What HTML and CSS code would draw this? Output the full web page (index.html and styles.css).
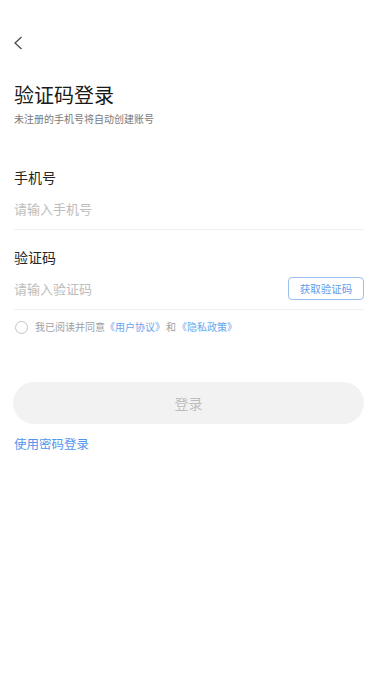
FILE: index.html
```html
<!DOCTYPE html>
<html lang="zh">
<head>
<meta charset="utf-8">
<link rel="stylesheet" href="styles.css">
</head>
<body>
<div class="page">
  <div class="nav">
    <svg class="back" width="10" height="14" viewBox="0 0 10 14"><path d="M8.5 1 L2 7 L8.5 13" fill="none" stroke="#444" stroke-width="1.2"/></svg>
  </div>
  <h1 class="title">验证码登录</h1>
  <p class="subtitle">未注册的手机号将自动创建账号</p>

  <div class="label first">手机号</div>
  <div class="field">
    <span class="placeholder">请输入手机号</span>
  </div>

  <div class="label">验证码</div>
  <div class="field">
    <span class="placeholder">请输入验证码</span>
    <span class="code-btn">获取验证码</span>
  </div>

  <div class="agree">
    <span class="radio"></span>
    <span class="agree-text">我已阅读并同意<a class="blue">《用户协议》</a><span class="and">和</span><a class="blue">《隐私政策》</a></span>
  </div>

  <div class="login">登录</div>
  <div class="pwd-link">使用密码登录</div>
</div>
</body>
</html>
```

FILE: styles.css
```css
* { box-sizing: border-box; }
html, body { margin: 0; padding: 0; background: #fff; }
body {
  font-family: "Noto Sans CJK SC", "Noto Sans", sans-serif;
  width: 378px;
  height: 673px;
  overflow: hidden;
}
.page { padding: 0 14px; }
.nav {
  height: 44px;
  margin-top: 21px;
  display: flex;
  align-items: center;
}
.back { display: block; margin-left: -1px; margin-top: -1px; }
.title {
  margin: 16px 0 0;
  font-size: 20px;
  line-height: 28px;
  font-weight: 400;
  color: #1a1a1a;
}
.subtitle {
  margin: 3px 0 0;
  font-size: 10px;
  line-height: 14px;
  color: #7a7a7a;
}
.label {
  font-size: 14px;
  line-height: 20px;
  color: #262626;
  margin-top: 17px;
}
.label.first { margin-top: 41px; }
.field {
  height: 43px;
  border-bottom: 1px solid #f0f0f0;
  display: flex;
  align-items: center;
  justify-content: space-between;
}
.placeholder {
  font-size: 13px;
  color: #bdbdbd;
}
.code-btn {
  width: 76px;
  height: 23px;
  border: 1px solid #9cc0f2;
  border-radius: 4px;
  font-size: 10.5px;
  color: #5f9be8;
  display: flex;
  align-items: center;
  justify-content: center;
}
.agree {
  display: flex;
  align-items: center;
  margin-top: 10px;
  height: 14px;
}
.radio {
  width: 13px;
  height: 13px;
  border: 1px solid #c4c4c4;
  border-radius: 50%;
  margin-left: 1px;
  flex: none;
}
.agree-text {
  margin-left: 7px;
  font-size: 10px;
  line-height: 14px;
  color: #a0a0a0;
  white-space: nowrap;
}
.blue { color: #6aa5ec; }
.and { margin: 0 1px; }
.login {
  margin-top: 48px;
  margin-left: -1px;
  height: 42px;
  border-radius: 21px;
  background: #f2f2f2;
  color: #bdbdbd;
  font-size: 14px;
  display: flex;
  align-items: center;
  justify-content: center;
}
.pwd-link {
  margin-top: 11px;
  font-size: 12.5px;
  line-height: 17px;
  color: #5196ee;
}
```
